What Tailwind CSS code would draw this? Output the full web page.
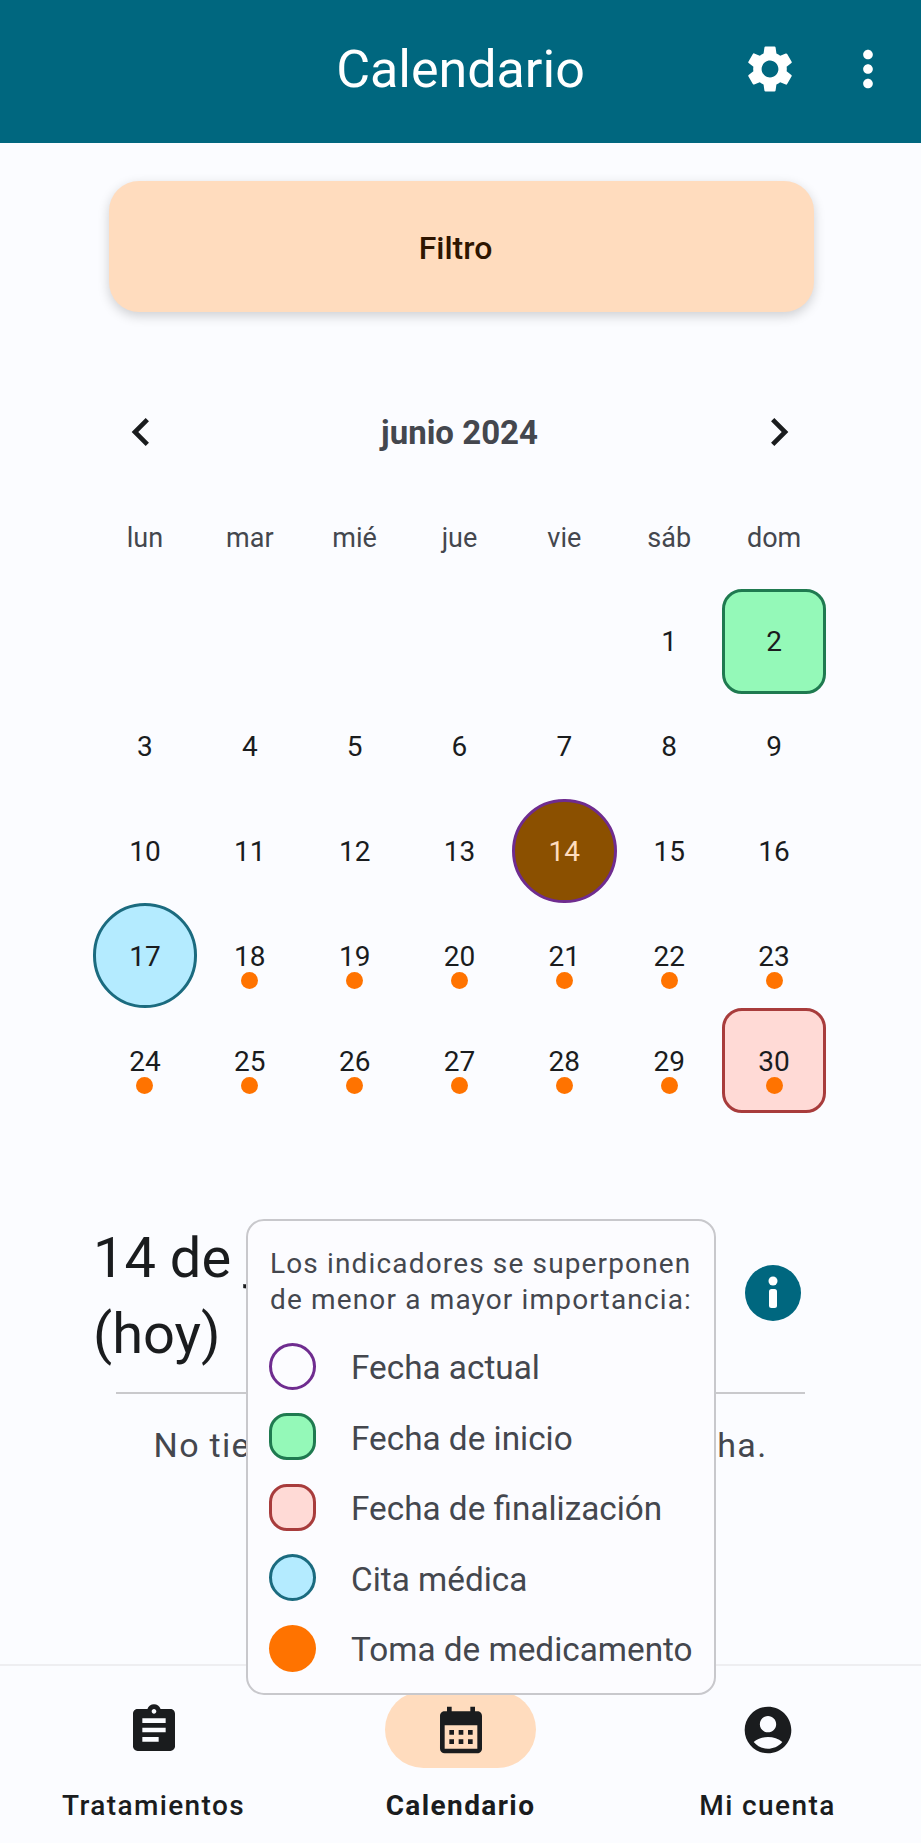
<!DOCTYPE html>
<html lang="es">
<head>
  <meta charset="UTF-8" />
  <meta name="viewport" content="width=device-width, initial-scale=1.0" />
  <title>Calendario</title>
  <script src="https://cdn.jsdelivr.net/npm/@tailwindcss/browser@4"></script>
</head>
<body class="bg-[#fbfcff] font-[Roboto,sans-serif]">
  <div class="relative w-[921px] h-[1843px] flex flex-col overflow-hidden">

    <!-- app bar -->
    <header class="relative shrink-0 h-[143px] bg-[#00677f] flex items-center justify-center text-white">
      <h1 class="text-[52px] leading-none pb-[3px]">Calendario</h1>
      <svg class="absolute left-[742px] top-[41px] w-[56px] h-[56px]" viewBox="0 0 24 24" fill="currentColor"><path d="M19.14 12.94c.04-.3.06-.61.06-.94 0-.32-.02-.64-.07-.94l2.03-1.58c.18-.14.23-.41.12-.61l-1.92-3.32c-.12-.22-.37-.29-.59-.22l-2.39.96c-.5-.38-1.03-.7-1.62-.94l-.36-2.54c-.04-.24-.24-.41-.48-.41h-3.84c-.24 0-.43.17-.47.41l-.36 2.54c-.59.24-1.13.57-1.62.94l-2.39-.96c-.22-.08-.47 0-.59.22L2.74 8.87c-.12.21-.08.47.12.61l2.03 1.58c-.05.3-.09.63-.09.94s.02.64.07.94l-2.03 1.58c-.18.14-.23.41-.12.61l1.92 3.32c.12.22.37.29.59.22l2.39-.96c.5.38 1.03.7 1.62.94l.36 2.54c.05.24.24.41.48.41h3.84c.24 0 .44-.17.47-.41l.36-2.54c.59-.24 1.13-.56 1.62-.94l2.39.96c.22.08.47 0 .59-.22l1.92-3.32c.12-.22.07-.47-.12-.61l-2.01-1.58zM12 15.6c-1.98 0-3.6-1.62-3.6-3.6s1.62-3.6 3.6-3.6 3.6 1.62 3.6 3.6-1.62 3.6-3.6 3.6z"/></svg>
      <svg class="absolute left-[839px] top-[40px] w-[58px] h-[58px]" viewBox="0 0 24 24" fill="currentColor"><path d="M12 8c1.1 0 2-.9 2-2s-.9-2-2-2-2 .9-2 2 .9 2 2 2zm0 2c-1.1 0-2 .9-2 2s.9 2 2 2 2-.9 2-2-.9-2-2-2zm0 6c-1.1 0-2 .9-2 2s.9 2 2 2 2-.9 2-2-.9-2-2-2z"/></svg>
    </header>

    <main class="flex-1 min-h-0">
      <button class="block ml-[109px] mt-[38px] w-[705px] h-[131px] rounded-[30px] bg-[#ffdcbe] text-[#2e1500] text-[32px] font-medium shadow-[0_4px_12px_rgba(0,0,0,0.18)] pr-[12px] pt-[2px]">Filtro</button>

      <!-- calendar -->
      <div class="ml-[92.5px] mt-[90px] w-[734px]">
        <div class="flex items-center justify-between h-[60px] px-[20px] text-[#1a1c1e]">
          <svg class="w-[56px] h-[56px]" viewBox="0 0 24 24" fill="currentColor"><path d="M15.41 7.41 14 6l-6 6 6 6 1.41-1.41L10.83 12z"/></svg>
          <span class="text-[33px] font-bold text-[#44474e] pt-[2px]">junio 2024</span>
          <svg class="w-[56px] h-[56px]" viewBox="0 0 24 24" fill="currentColor"><path d="M8.59 16.59 10 18l6-6-6-6-1.41 1.41L13.17 12z"/></svg>
        </div>

        <div class="grid grid-cols-7 mt-[23px] h-[104px] items-center text-center text-[27px] text-[#44474e] pt-[2px]">
          <span>lun</span><span>mar</span><span>mié</span><span>jue</span><span>vie</span><span>sáb</span><span>dom</span>
        </div>

        <div class="grid grid-cols-7 auto-rows-[104.8px] text-[28px] text-[#1a1c1e]">
          <div></div><div></div><div></div><div></div><div></div>
          <div class="flex items-center justify-center pt-[2px]">1</div>
          <div class="flex items-center justify-center pt-[2px] rounded-[20px] bg-[#94f9b8] border-[3px] border-[#1f7a50]">2</div>

          <div class="flex items-center justify-center pt-[2px]">3</div>
          <div class="flex items-center justify-center pt-[2px]">4</div>
          <div class="flex items-center justify-center pt-[2px]">5</div>
          <div class="flex items-center justify-center pt-[2px]">6</div>
          <div class="flex items-center justify-center pt-[2px]">7</div>
          <div class="flex items-center justify-center pt-[2px]">8</div>
          <div class="flex items-center justify-center pt-[2px]">9</div>

          <div class="flex items-center justify-center pt-[2px]">10</div>
          <div class="flex items-center justify-center pt-[2px]">11</div>
          <div class="flex items-center justify-center pt-[2px]">12</div>
          <div class="flex items-center justify-center pt-[2px]">13</div>
          <div class="flex items-center justify-center pt-[2px] rounded-full bg-[#8b5000] border-[3px] border-[#6f2c8f] text-[#ffdcbe]">14</div>
          <div class="flex items-center justify-center pt-[2px]">15</div>
          <div class="flex items-center justify-center pt-[2px]">16</div>

          <div class="flex items-center justify-center pt-[2px] rounded-full bg-[#b4ebff] border-[3px] border-[#1b6b7f]">17</div>
          <div class="relative flex items-center justify-center pt-[2px]">18<i class="absolute top-[69px] w-[17px] h-[17px] rounded-full bg-[#ff7300]"></i></div>
          <div class="relative flex items-center justify-center pt-[2px]">19<i class="absolute top-[69px] w-[17px] h-[17px] rounded-full bg-[#ff7300]"></i></div>
          <div class="relative flex items-center justify-center pt-[2px]">20<i class="absolute top-[69px] w-[17px] h-[17px] rounded-full bg-[#ff7300]"></i></div>
          <div class="relative flex items-center justify-center pt-[2px]">21<i class="absolute top-[69px] w-[17px] h-[17px] rounded-full bg-[#ff7300]"></i></div>
          <div class="relative flex items-center justify-center pt-[2px]">22<i class="absolute top-[69px] w-[17px] h-[17px] rounded-full bg-[#ff7300]"></i></div>
          <div class="relative flex items-center justify-center pt-[2px]">23<i class="absolute top-[69px] w-[17px] h-[17px] rounded-full bg-[#ff7300]"></i></div>

          <div class="relative flex items-center justify-center pt-[2px]">24<i class="absolute top-[69px] w-[17px] h-[17px] rounded-full bg-[#ff7300]"></i></div>
          <div class="relative flex items-center justify-center pt-[2px]">25<i class="absolute top-[69px] w-[17px] h-[17px] rounded-full bg-[#ff7300]"></i></div>
          <div class="relative flex items-center justify-center pt-[2px]">26<i class="absolute top-[69px] w-[17px] h-[17px] rounded-full bg-[#ff7300]"></i></div>
          <div class="relative flex items-center justify-center pt-[2px]">27<i class="absolute top-[69px] w-[17px] h-[17px] rounded-full bg-[#ff7300]"></i></div>
          <div class="relative flex items-center justify-center pt-[2px]">28<i class="absolute top-[69px] w-[17px] h-[17px] rounded-full bg-[#ff7300]"></i></div>
          <div class="relative flex items-center justify-center pt-[2px]">29<i class="absolute top-[69px] w-[17px] h-[17px] rounded-full bg-[#ff7300]"></i></div>
          <div class="relative flex items-center justify-center pt-[2px] rounded-[20px] bg-[#ffdad6] border-[3px] border-[#a83c3c]">30<i class="absolute top-[66px] w-[17px] h-[17px] rounded-full bg-[#ff7300]"></i></div>
        </div>
      </div>

      <!-- selected day -->
      <div class="ml-[93px] mt-[107px] w-[708px] flex items-center justify-between">
        <h2 class="w-[600px] text-[56px] leading-[76px] text-[#1a1c1e]">14 de junio de 2024 (hoy)</h2>
        <svg class="w-[56px] h-[56px] mb-[6px]" viewBox="0 0 56 56"><circle cx="28" cy="28" r="28" fill="#00677f"/><circle cx="28" cy="16" r="4.5" fill="#fff"/><rect x="24" y="24" width="8" height="19" rx="2.5" fill="#fff"/></svg>
      </div>
      <div class="ml-[116px] mt-[20px] w-[689px] h-[2px] bg-[#c9c9cc]"></div>
      <p class="mt-[28px] text-center text-[34px] leading-[46px] tracking-[1.3px] text-[#44474e]">No tienes tratamientos en esta fecha.</p>
    </main>

    <!-- bottom nav -->
    <nav class="shrink-0 h-[179px] border-t-2 border-[#eeeef1] grid grid-cols-3 text-[28px] tracking-[1.4px] font-medium text-[#1a1c1e]">
      <div class="flex flex-col items-center pt-[25px]">
        <div class="flex items-center justify-center w-[151px] h-[77px]">
          <svg class="w-[56px] h-[56px]" viewBox="0 0 24 24" fill="currentColor"><path d="M19 3h-4.18C14.4 1.84 13.3 1 12 1c-1.3 0-2.4.84-2.82 2H5c-1.1 0-2 .9-2 2v14c0 1.1.9 2 2 2h14c1.1 0 2-.9 2-2V5c0-1.1-.9-2-2-2zm-7 0c.55 0 1 .45 1 1s-.45 1-1 1-1-.45-1-1 .45-1 1-1zm2 14H7v-2h7v2zm3-4H7v-2h10v2zm0-4H7V7h10v2z"/></svg>
        </div>
        <span class="mt-[17px]">Tratamientos</span>
      </div>
      <div class="flex flex-col items-center pt-[25px]">
        <div class="flex items-center justify-center w-[151px] h-[77px] rounded-full bg-[#ffdcbe]">
          <svg class="w-[56px] h-[56px]" viewBox="0 0 24 24" fill="currentColor"><path d="M19 4h-1V2h-2v2H8V2H6v2H5c-1.11 0-1.99.9-1.99 2L3 20a2 2 0 0 0 2 2h14c1.1 0 2-.9 2-2V6c0-1.1-.9-2-2-2zm0 16H5V10h14v10zM9 14H7v-2h2v2zm4 0h-2v-2h2v2zm4 0h-2v-2h2v2zm-8 4H7v-2h2v2zm4 0h-2v-2h2v2zm4 0h-2v-2h2v2z"/></svg>
        </div>
        <span class="mt-[17px] font-bold">Calendario</span>
      </div>
      <div class="flex flex-col items-center pt-[25px]">
        <div class="flex items-center justify-center w-[151px] h-[77px]">
          <svg class="w-[56px] h-[56px]" viewBox="0 0 24 24" fill="currentColor"><path d="M12 2C6.48 2 2 6.48 2 12s4.48 10 10 10 10-4.48 10-10S17.52 2 12 2zm0 4c1.93 0 3.5 1.57 3.5 3.5S13.93 13 12 13s-3.5-1.57-3.5-3.5S10.07 6 12 6zm0 14c-2.03 0-4.43-.82-6.14-2.88C7.55 15.8 9.68 15 12 15s4.45.8 6.14 2.12C16.43 19.18 14.03 20 12 20z"/></svg>
        </div>
        <span class="mt-[17px]">Mi cuenta</span>
      </div>
    </nav>

    <!-- legend popup -->
    <div class="absolute z-10 left-[246px] top-[1219px] w-[470px] h-[476px] rounded-[18px] border-2 border-[#c8c8cc] bg-[#fcfcff] pl-[21px] pt-[25px] text-[#44474e]">
      <p class="ml-[1px] text-[28px] leading-[36px] tracking-[1.15px] whitespace-nowrap">Los indicadores se superponen<br />de menor a mayor importancia:</p>
      <ul class="mt-[13px] text-[33.3px]">
        <li class="flex items-center gap-[35px] h-[70.5px]"><span class="w-[47px] h-[47px] rounded-full border-[3px] border-[#6f2c8f] bg-[#fcfcff]"></span><span class="pt-[4px]">Fecha actual</span></li>
        <li class="flex items-center gap-[35px] h-[70.5px]"><span class="w-[47px] h-[47px] rounded-[18px] border-[3px] border-[#1f7a50] bg-[#94f9b8]"></span><span class="pt-[4px]">Fecha de inicio</span></li>
        <li class="flex items-center gap-[35px] h-[70.5px]"><span class="w-[47px] h-[47px] rounded-[18px] border-[3px] border-[#a83c3c] bg-[#ffdad6]"></span><span class="pt-[4px]">Fecha de finalización</span></li>
        <li class="flex items-center gap-[35px] h-[70.5px]"><span class="w-[47px] h-[47px] rounded-full border-[3px] border-[#1b6b7f] bg-[#b4ebff]"></span><span class="pt-[4px]">Cita médica</span></li>
        <li class="flex items-center gap-[35px] h-[70.5px]"><span class="w-[47px] h-[47px] rounded-full bg-[#ff7300]"></span><span class="pt-[4px]">Toma de medicamento</span></li>
      </ul>
    </div>
  </div>
</body>
</html>
